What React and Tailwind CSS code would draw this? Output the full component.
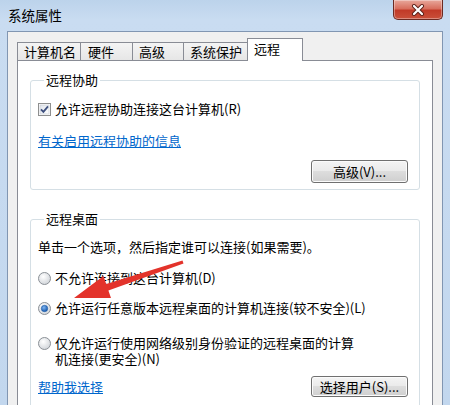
import React from "react";

function Radio({ checked }) {
  return (
    <svg width="13" height="13" viewBox="0 0 13 13" className="shrink-0">
      <defs>
        <radialGradient id={checked ? "rgc" : "rgu"} cx="0.4" cy="0.35" r="0.7">
          <stop offset="0" stopColor="#ffffff" />
          <stop offset="1" stopColor="#cfd3d8" />
        </radialGradient>
        <radialGradient id="dot" cx="0.4" cy="0.35" r="0.7">
          <stop offset="0" stopColor="#7fb6f2" />
          <stop offset="1" stopColor="#0d4fa5" />
        </radialGradient>
      </defs>
      <circle cx="6.5" cy="6.5" r="6" fill={`url(#${checked ? "rgc" : "rgu"})`} stroke="#8b9096" strokeWidth="1" />
      {checked && <circle cx="6.5" cy="6.5" r="3.2" fill="url(#dot)" stroke="#1d5da8" strokeWidth="0.6" />}
    </svg>
  );
}

function Checkbox() {
  return (
    <svg width="13" height="13" viewBox="0 0 13 13" className="shrink-0">
      <defs>
        <linearGradient id="cbg" x1="0" y1="0" x2="1" y2="1">
          <stop offset="0" stopColor="#dfe3ea" />
          <stop offset="1" stopColor="#ffffff" />
        </linearGradient>
      </defs>
      <rect x="0.5" y="0.5" width="12" height="12" fill="#fff" stroke="#8e8f8f" />
      <rect x="2" y="2" width="9" height="9" fill="url(#cbg)" stroke="#c3c8d0" strokeWidth="0.6" />
      <path d="M3 6.3 L5.4 8.8 L10 3.4" fill="none" stroke="#3d4f7e" strokeWidth="1.8" />
    </svg>
  );
}

function Button({ children, h }) {
  return (
    <div
      className={`flex items-center justify-center w-[97px] ${h} rounded-[3px] border border-[#707070] bg-[linear-gradient(#f4f4f4,#ebebeb_45%,#dddddd_50%,#cfcfcf)] text-[13px] leading-none text-black shadow-[inset_0_0_0_1px_#fbfbfb]`}
    >
      {children}
    </div>
  );
}

export default function App() {
  return (
    <div className="relative w-[450px] h-[405px] overflow-hidden flex flex-col bg-[linear-gradient(#bcd3eb,#c9dcf1_20px,#c2d7ee)] font-['Noto_Sans_CJK_SC',sans-serif] text-black">
      {/* Title bar */}
      <div className="h-[31px] flex justify-between shrink-0">
        <div className="pl-[8px] pt-[6px] text-[13.5px] leading-[18px] text-black">系统属性</div>
        <div className="mr-[7px] w-[50px] h-[20px] rounded-b-[5px] border border-t-0 border-[#6b2a22] bg-[linear-gradient(#e8a89c,#d86f5e_45%,#c13a28_55%,#c9503a)] flex items-center justify-center shadow-[inset_0_0_0_1px_rgba(255,255,255,0.35)]">
          <svg width="14" height="12" viewBox="0 0 14 12">
            <path d="M3 2 L11 10 M11 2 L3 10" stroke="#5a2019" strokeWidth="4" strokeLinecap="round" />
            <path d="M3 2 L11 10 M11 2 L3 10" stroke="#ffffff" strokeWidth="2.2" strokeLinecap="round" />
          </svg>
        </div>
      </div>

      {/* Dialog body */}
      <div className="flex-1 mx-[7px] border border-b-0 border-[#8196b2] bg-[#f0f0f0] pt-[6px] px-[9px] flex flex-col">
        {/* Tabs */}
        <div className="flex items-end h-[22px] text-[13px] leading-none">
          <div className="w-[64px] h-[18px] border border-b-0 border-[#898c95] bg-[linear-gradient(#f4f4f4,#e6e6e6)] pl-[6px] flex items-center">计算机名</div>
          <div className="w-[53px] h-[18px] -ml-px border border-b-0 border-[#898c95] bg-[linear-gradient(#f4f4f4,#e6e6e6)] pl-[7px] flex items-center">硬件</div>
          <div className="w-[52px] h-[18px] -ml-px border border-b-0 border-[#898c95] bg-[linear-gradient(#f4f4f4,#e6e6e6)] pl-[6px] flex items-center">高级</div>
          <div className="w-[65px] h-[18px] -ml-px border border-b-0 border-[#898c95] bg-[linear-gradient(#f4f4f4,#e6e6e6)] pl-[6px] flex items-center">系统保护</div>
          <div className="relative z-10 w-[56px] h-[23px] -ml-px mb-[-1px] border border-b-0 border-[#898c95] bg-white pl-[6px] pt-[3px] flex items-start">远程</div>
        </div>

        {/* Panel */}
        <div className="flex-1 border border-b-0 border-[#898c95] bg-white px-[12px] pt-[11px] text-[13px]">
          <fieldset className="rounded-[3px] border border-[#d5dfe5] pl-[7px] pr-[11px] pb-[6px]">
            <legend className="ml-[6px] px-[2px] leading-[16px]">远程协助</legend>
            <div className="mt-[13px] flex items-center gap-[4px] leading-[16px]">
              <Checkbox />
              <span>允许远程协助连接这台计算机(R)</span>
            </div>
            <div className="mt-[16px] leading-[16px]">
              <span className="text-[#0066cc] underline">有关启用远程协助的信息</span>
            </div>
            <div className="mt-[11px] flex justify-end">
              <Button h="h-[23px]">高级(V)...</Button>
            </div>
          </fieldset>

          <fieldset className="mt-[21px] rounded-[3px] border border-[#d5dfe5] pl-[7px] pr-[11px] pb-[10px]">
            <legend className="ml-[6px] px-[2px] leading-[16px]">远程桌面</legend>
            <div className="mt-[12px] leading-[16px]">单击一个选项，然后指定谁可以连接(如果需要)。</div>
            <div className="mt-[15px] flex items-center gap-[4px] leading-[16px]">
              <Radio checked={false} />
              <span>不允许连接到这台计算机(D)</span>
            </div>
            <div className="mt-[14px] flex items-center gap-[4px] leading-[16px]">
              <Radio checked={true} />
              <span>允许运行任意版本远程桌面的计算机连接(较不安全)(L)</span>
            </div>
            <div className="mt-[19px] flex items-start gap-[4px] leading-[16px]">
              <div className="pt-[2px]">
                <Radio checked={false} />
              </div>
              <span>
                仅允许运行使用网络级别身份验证的远程桌面的计算
                <br />
                机连接(更安全)(N)
              </span>
            </div>
            <div className="mt-[9px] flex items-center justify-between">
              <span className="text-[#0066cc] underline leading-[16px]">帮助我选择</span>
              <Button h="h-[21px]">选择用户(S)...</Button>
            </div>
          </fieldset>
        </div>
      </div>

      {/* Red annotation arrow */}
      <svg className="absolute left-0 top-0 pointer-events-none" width="450" height="405" viewBox="0 0 450 405">
        <polygon
          points="74,298 111,298 108.4,290.5 183.5,263.5 182.5,260.5 106.2,284.1 103.5,276"
          fill="#e3332b"
        />
      </svg>
    </div>
  );
}
